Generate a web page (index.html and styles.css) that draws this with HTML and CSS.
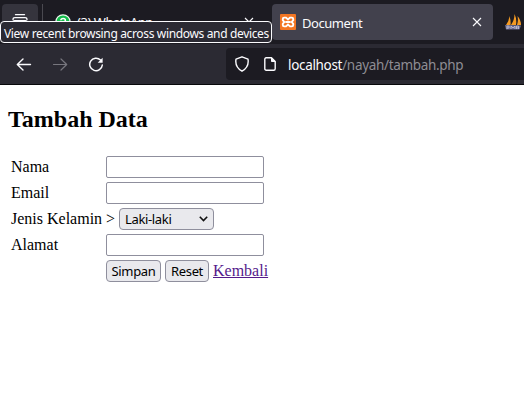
FILE: index.html
```html
<!DOCTYPE html>
<html lang="id">
<head>
<meta charset="utf-8">
<title>Document</title>
<link rel="stylesheet" href="styles.css">
</head>
<body>
<header class="browser">
  <div class="tabs">
    <div class="view-button">
      <svg width="18" height="18" viewBox="0 0 18 18" fill="none" stroke="#fbfbfe" stroke-width="1.3" stroke-linecap="round"><path d="M4.500 1.700h9"/><path d="M2 6.500Q2 4.700 4 4.700h10Q16 4.700 16 6.500"/><rect x="1.700" y="7.700" width="14.600" height="9" rx="2"/></svg>
    </div>
    <div class="tab">
      <svg width="16" height="16" viewBox="0 0 16 16"><circle cx="8" cy="8" r="7.2" fill="#13bd4b" stroke="#e9f5ec" stroke-width="1.3"/><path d="M5.8 6.3C6 3.8 10.4 3.8 10.4 6.3C10.4 8 8 8 8 10" fill="none" stroke="#fff" stroke-width="1.5"/></svg>
      <span class="tab-title">(3) WhatsApp</span>
      <svg class="close" width="10" height="10" viewBox="0 0 10 10" stroke="#fbfbfe" stroke-width="1.1"><path d="M1 1l8 8M9 1L1 9"/></svg>
    </div>
    <div class="tab active">
      <svg width="16" height="16" viewBox="0 0 16 16"><rect width="16" height="16" rx="1" fill="#f37623"/><path d="M4.2 3.6H6L8 5.4L10 3.6h1.8Q13.2 3.6 13.2 5v1.2L11.8 8l1.4 1.8V11q0 1.4-1.4 1.4H10L8 10.6l-2 1.8H4.2Q2.8 12.4 2.8 11V9.800L4.200 8L2.800 6.200V5Q2.800 3.600 4.200 3.600z" fill="#f37623" stroke="#fff" stroke-width="1.900"/><path d="M5.300 8h5.400" stroke="#fff" stroke-width="2"/></svg>
      <span class="tab-title">Document</span>
      <svg class="close" width="10" height="10" viewBox="0 0 10 10" stroke="#fbfbfe" stroke-width="1.1"><path d="M1 1l8 8M9 1L1 9"/></svg>
    </div>
    <svg class="pma" width="17" height="16" viewBox="0 0 17 16"><path d="M1 11Q4 7 4.500 2Q6 7 5.500 11zM6 11Q9.500 6 9.500 0Q12 5 11 11zM12 11Q13.500 7 12.500 2Q16 6 16 11z" fill="#f49a23"/><path d="M0 11l16 .5-1.500 4H1z" fill="#6c6c91"/><path d="M2 15v-3h2v2H2M6 15v-3l2 2 2-2v3M11.500 15v-3h2v3m-2-1h2" fill="none" stroke="#c5c4d8" stroke-width=".8"/></svg>
  </div>
  <div class="toolbar">
    <svg class="back" width="16" height="16" viewBox="0 0 16 16" fill="none" stroke="#fbfbfe" stroke-width="1.400" stroke-linecap="round" stroke-linejoin="round"><path d="M14.500 8.500H1.500M7 3L1.300 8.500L7 14"/></svg>
    <svg class="forward" width="16" height="16" viewBox="0 0 16 16" fill="none" stroke="#77767e" stroke-width="1.200" stroke-linecap="round" stroke-linejoin="round"><path d="M1.500 8.500h13M9 3L14.700 8.500L9 14"/></svg>
    <svg class="reload" width="16" height="16" viewBox="0 0 16 16" fill="none" stroke="#fbfbfe" stroke-width="1.500" stroke-linecap="round"><path d="M12.500 4A6.300 6.300 0 1 0 14.300 9"/><path d="M14.600 1.800v4.900H9.700z" fill="#fbfbfe" stroke="none"/></svg>
    <div class="address">
      <svg width="16" height="16" viewBox="0 0 16 16" fill="none" stroke="#fbfbfe" stroke-width="1.400" stroke-linejoin="round"><path d="M8 .8L14 3.200Q15.300 11 8 15.200Q.7 11 2 3.200z"/></svg>
      <svg class="page-icon" width="12" height="14" viewBox="0 0 12 14" fill="none" stroke="#fbfbfe" stroke-width="1.400" stroke-linejoin="round"><path d="M2.200.8H7.500L11.200 4.500V11.700Q11.200 13.200 9.700 13.200H2.300Q.8 13.200.8 11.700V2.200Q.8.800 2.200.8z"/><path d="M7.500 1v3.500h3.500z" fill="#fbfbfe" stroke-width="1"/></svg>
      <span class="url"><b>localhost</b>/nayah/tambah.php</span>
    </div>
  </div>
  <div class="tooltip"><span>View recent browsing across windows and devices</span></div>
</header>
<main>
  <h2>Tambah Data</h2>
  <form class="form">
    <label for="nama">Nama</label><div class="cell"><input id="nama" type="text"></div>
    <label for="email">Email</label><div class="cell"><input id="email" type="text"></div>
    <label for="jk">Jenis Kelamin</label>
    <div class="cell">&gt;
      <div class="select" id="jk"><span>Laki-laki</span><svg width="9" height="6" viewBox="0 0 9 6" fill="none" stroke="#111" stroke-width="1.600"><path d="M.8.8L4.500 4.500L8.200.8"/></svg></div>
    </div>
    <label for="alamat">Alamat</label><div class="cell"><input id="alamat" type="text"></div>
    <span></span><div class="cell"><button class="save" type="button">Simpan</button><button class="reset" type="button">Reset</button><a href="#">Kembali</a></div>
  </form>
</main>
</body>
</html>
```
FILE: styles.css
```css
* { box-sizing: border-box; }
body {
  margin: 0;
  height: 404px;
  overflow: hidden;
  background: #fff;
  color: #000;
  font: 16px "Liberation Serif", serif;
}
svg { flex: none; display: block; }
.browser {
  position: relative;
  height: 85px;
  background: #2b2a33;
  border-bottom: 1px solid #08080b;
  font: 13px "Noto Sans", sans-serif;
  color: #fbfbfe;
}
.tabs {
  display: flex;
  height: 44px;
  padding: 4px 0 4px 2px;
  background: #1c1b22;
}
.view-button {
  width: 36px;
  height: 36px;
  padding: 9px;
  border-radius: 4px;
  background: #35343d;
}
.tab {
  display: flex;
  align-items: center;
  width: 226px;
  height: 36px;
  margin-left: 4px;
  padding: 0 14px 0 12px;
  border-left: 1px solid #4a4950;
}
.tab.active {
  width: 221px;
  padding: 0 11px 0 8px;
  border: 0;
  border-radius: 4px;
  background: #42414d;
}
.tab-title { margin-left: 6px; letter-spacing: -.45px; white-space: nowrap; }
.tab.active .tab-title { padding-top: 1px; }
.close { margin-left: auto; }
.pma { margin: 10px 0 0 12px; }
.toolbar {
  display: flex;
  align-items: center;
  height: 40px;
  padding-left: 16px;
}
.forward { margin-left: 20px; }
.reload { margin-left: 20px; }
.address {
  display: flex;
  align-items: center;
  flex: 1;
  height: 32px;
  margin-left: 122px;
  padding-left: 8px;
  border-radius: 4px 0 0 4px;
  background: #1c1b22;
}
.page-icon { margin-left: 14px; }
.url {
  margin-left: 12px;
  padding-top: 1px;
  color: #8e8d94;
  font-size: 13.5px;
  letter-spacing: -.32px;
  white-space: nowrap;
}
.url b { color: #fbfbfe; font-weight: 400; }
.tooltip {
  position: absolute;
  top: 21px;
  left: 0;
  width: 272px;
  height: 22px;
  padding-left: 3px;
  border: 1px solid #fbfbfe;
  border-radius: 4px;
  background: #2b2a33;
  font-size: 12px;
  line-height: 23px;
  letter-spacing: -.35px;
  white-space: nowrap;
}
main { padding: 20px 8px 0; }
h2 { margin: 0 0 23px; font-size: 24px; line-height: 28px; }
.form {
  display: grid;
  grid-template-columns: 91px 1fr;
  grid-auto-rows: 22px;
  column-gap: 4px;
  row-gap: 4px;
  padding-left: 3px;
  line-height: 22px;
}
label { white-space: nowrap; }
.cell { display: flex; }
input {
  width: 158px;
  height: 22px;
  margin: 0;
  border: 1px solid #8f8f9d;
  border-radius: 2px;
  background: #fff;
}
.select, button {
  height: 22px;
  border: 1px solid #8f8f9d;
  border-radius: 4px;
  background: #e9e9ed;
  color: #000;
  font: 13px/21px "Noto Sans", sans-serif;
  letter-spacing: -.35px;
}
.select {
  display: flex;
  align-items: center;
  justify-content: space-between;
  width: 95px;
  margin-left: 4px;
  padding: 0 5px;
}
button { padding: 0; }
.save { width: 55px; }
.reset { width: 44px; margin: 0 4px; }
a { color: #551a8b; }
```
